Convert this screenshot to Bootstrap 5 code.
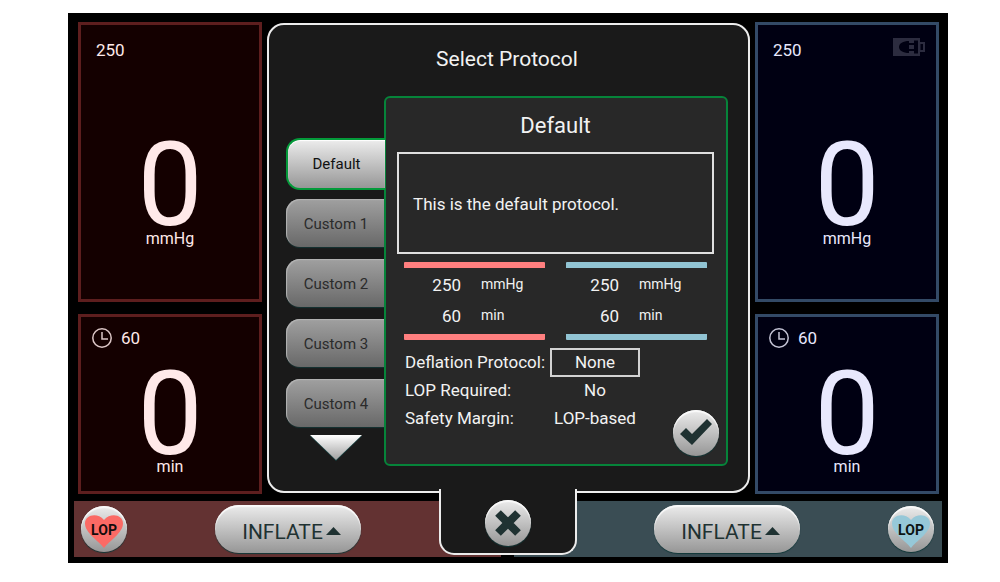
<!DOCTYPE html>
<html lang="en">
<head>
<meta charset="utf-8">
<meta name="viewport" content="width=device-width, initial-scale=1">
<title>Select Protocol</title>
<link rel="stylesheet" href="https://cdn.jsdelivr.net/npm/bootstrap@5.3.0/dist/css/bootstrap.min.css">
<style>
  body { font-family: Roboto, "Liberation Sans", sans-serif; font-size: 17px; line-height: 24px; background: #fff; }
  h1, h2, p, dl, dd, dt { margin: 0; font-weight: 400; }
  .device { margin: 13px 52px 0 68px; padding: 9px 0 6px; background: #000; }
  .screen { display: grid; grid-template-columns: 184fr 483fr 184fr; column-gap: 5px; padding: 0 9px 0 10px; }

  /* cuff readouts */
  .readout-col { padding-bottom: 7px; }
  .readout { border: 3px solid; padding: 13px 15px; }
  .readout.pressure { min-height: 280px; }
  .readout.timer { min-height: 180px; padding: 9px 10px; }
  .cuff-a { background: #140000; border-color: #5d1e1e; color: #ffe9e9; }
  .cuff-b { background: #000012; border-color: #334a66; color: #e8e8fd; }
  .figure-num { font-size: 116px; line-height: 88px; text-align: center; }
  .pressure .figure-num { margin-top: 79px; }
  .timer .figure-num { margin-top: 20px; }
  .figure-unit { text-align: center; font-size: 16px; line-height: 20px; }
  .timer .figure-unit { line-height: 18px; }

  /* dialog */
  .dialog { background: #1a1a1a; border: 2px solid #ececec; border-radius: 17px; margin: 1px 0 8px; padding: 1px 20px 25px 17px; color: #f2f2f2; }
  .dialog h1 { font-size: 21px; line-height: 32px; padding: 17px 0 21px; text-align: center; }
  .tabs { flex: 0 0 98px; padding-top: 42px; gap: 12px; }
  .tab-btn { height: 48px; border: 0; border-radius: 14px 0 0 14px; font-size: 15px; color: #2b2b2b; padding: 2px 0 0 2px;
    background: linear-gradient(#a0a0a0, #686868); box-shadow: inset 1px 1px 1px #b4b4b4, 0 1px 1px #163434; }
  .tab-btn.active { height: 52px; margin: 0 -1px -3px 0; padding: 0; color: #111; z-index: 1; position: relative;
    border: 2px solid #049a3a; border-right: 0; background: linear-gradient(#ececec, #979797); box-shadow: inset 0 1px 1px #fff; }
  .more-btn { border: 0; background: none; padding: 0 0 0 2px; line-height: 0; margin-top: -5px; }
  .detail { background: #282828; border: 2px solid #06843a; border-radius: 6px; padding: 12px 12px 8px 11px; min-height: 370px; }
  .detail h2 { font-size: 22px; line-height: 32px; text-align: center; }
  .note { border: 2px solid #e0e0e0; height: 102px; margin-top: 10px; padding: 2px 14px 0; display: flex; align-items: center; }
  .limits { gap: 21px; padding: 8px 7px 0; }
  .limits table { flex: 1 1 0; table-layout: fixed; border-collapse: separate; border-spacing: 0; border-top: 6px solid; border-bottom: 6px solid; border-radius: 1px; }
  .limits .red { border-color: #ff7f7f; }
  .limits .blue { border-color: #91c4d3; }
  .limits td { height: 32px; padding: 0 0 0 20px; font-size: 14px; color: #f2f2f2; border: 0; }
  .limits th { height: 32px; width: 57px; padding: 2px 0 0; font-weight: 400; text-align: right; color: #f2f2f2; border: 0; }
  .limits .blue th { width: 53px; }
  .limits tr:last-child > * { height: 34px; padding-bottom: 4px; }
  .facts { display: grid; grid-template-columns: 145px 90px; margin: 8px 0 0 8px; grid-auto-rows: 28px; align-items: center; align-content: start; }
  .facts dd { text-align: center; white-space: nowrap; }
  .pick { display: block; width: 100%; height: 29px; border: 2px solid #d2d2d2; background: none; color: #f2f2f2; padding: 0; line-height: 24px; }

  /* metallic controls */
  .metal { border: 0; padding: 0; background: linear-gradient(#ececec, #969696); color: #1f3232;
    box-shadow: inset 0 2px 1px #fafafa, 0 1px 1px #103838; }
  .round-btn { width: 46px; height: 46px; border-radius: 50%; display: grid; place-items: center; flex: none; }
  .confirm { margin-right: -5px; }
  .inflate { width: 146px; height: 48px; border-radius: 24px; font-size: 21px; padding: 5px 0 0 8px; }
  .inflate svg { margin: 0 0 3px 2px; }
  .actions { gap: 13px; margin: 0 6px; position: relative; }
  .side { flex: 1; height: 56px; }
  .side-a { background: #633232; padding-left: 7px; }
  .side-b { background: #3a4d54; padding-right: 8px; }
  .close-tab { position: absolute; left: 50%; bottom: 2px; width: 138px; height: 66px; transform: translateX(-50%);
    padding-top: 4px; background: #1a1a1a; border: 2px solid #ececec; border-top: 0; border-radius: 0 0 15px 15px; }
  .gap-wide { gap: 88px; }
</style>
</head>
<body>
<main class="device">
  <div class="screen">
    <div class="readout-col d-flex flex-column justify-content-between">
      <section class="readout pressure cuff-a">
        <div>250</div>
        <div class="figure-num">0</div>
        <div class="figure-unit">mmHg</div>
      </section>
      <section class="readout timer cuff-a">
        <div class="d-flex align-items-center">
          <svg class="me-2" width="22" height="22" viewBox="0 0 22 22" fill="none" stroke="#dcc6c6" stroke-width="1.500"><circle cx="11" cy="11" r="9.200"/><path d="M11 5v7h6"/></svg>60
        </div>
        <div class="figure-num">0</div>
        <div class="figure-unit">min</div>
      </section>
    </div>

    <section class="dialog" role="dialog" aria-labelledby="dlg-title">
      <h1 id="dlg-title">Select Protocol</h1>
      <div class="d-flex">
        <nav class="tabs d-flex flex-column">
          <button type="button" class="tab-btn active">Default</button>
          <button type="button" class="tab-btn">Custom 1</button>
          <button type="button" class="tab-btn">Custom 2</button>
          <button type="button" class="tab-btn">Custom 3</button>
          <button type="button" class="tab-btn">Custom 4</button>
          <button type="button" class="more-btn" aria-label="More protocols">
            <svg width="54" height="28" viewBox="0 0 54 28"><defs><linearGradient id="tri" x2="0" y2="1"><stop stop-color="#fff"/><stop offset="1" stop-color="#a0a0a0"/></linearGradient></defs><path d="M1 2h52L27 27z" fill="#164040"/><path d="M1 1h52L27 26z" fill="url(#tri)"/></svg>
          </button>
        </nav>
        <div class="detail d-flex flex-column flex-grow-1">
          <h2>Default</h2>
          <p class="note">This is the default protocol.</p>
          <div class="limits d-flex">
            <table class="red">
              <tr><th scope="row">250</th><td>mmHg</td></tr>
              <tr><th scope="row">60</th><td>min</td></tr>
            </table>
            <table class="blue">
              <tr><th scope="row">250</th><td>mmHg</td></tr>
              <tr><th scope="row">60</th><td>min</td></tr>
            </table>
          </div>
          <div class="d-flex flex-grow-1 justify-content-between">
            <dl class="facts">
              <dt id="defl">Deflation Protocol:</dt><dd><button type="button" class="pick" aria-describedby="defl">None</button></dd>
              <dt>LOP Required:</dt><dd>No</dd>
              <dt>Safety Margin:</dt><dd>LOP-based</dd>
            </dl>
            <button type="button" class="metal round-btn confirm mt-auto" aria-label="Confirm">
              <svg width="36" height="30" viewBox="0 0 36 30"><path d="M2 16l6-6 6 6L29 1l5 5-20 21z" fill="#1f3232"/></svg>
            </button>
          </div>
        </div>
      </div>
    </section>

    <div class="readout-col d-flex flex-column justify-content-between">
      <section class="readout pressure cuff-b">
        <div class="d-flex justify-content-between">250
          <svg width="34" height="18" viewBox="0 0 34 18" style="margin-right:-5px"><path d="M1 0h27v4h5v10h-5v4H1z" fill="#2c2c3f"/><path d="M28.500 6H31v6h-2.500z" fill="#000012"/><path d="M7 9c0-3.500 4-6 10-6v12C11 15 7 12.500 7 9z" fill="#000012"/><path d="M17 6h5M17 12h5" stroke="#000012" stroke-width="2"/><path d="M22 2.500h4v13h-4z" fill="#000012"/></svg>
        </div>
        <div class="figure-num">0</div>
        <div class="figure-unit">mmHg</div>
      </section>
      <section class="readout timer cuff-b">
        <div class="d-flex align-items-center">
          <svg class="me-2" width="22" height="22" viewBox="0 0 22 22" fill="none" stroke="#c4c4d6" stroke-width="1.500"><circle cx="11" cy="11" r="9.200"/><path d="M11 5v7h6"/></svg>60
        </div>
        <div class="figure-num">0</div>
        <div class="figure-unit">min</div>
      </section>
    </div>
  </div>

  <footer class="actions d-flex">
    <div class="side side-a d-flex align-items-center gap-wide">
      <button type="button" class="metal round-btn">
        <svg width="42" height="42" viewBox="0 0 42 42"><path d="M21 40C16 33 2 25 2 15.500 2 7 14 4 21 12 28 4 40 7 40 15.500 40 25 26 33 21 40z" fill="#fb6a65"/><text x="21" y="27" text-anchor="middle" font-size="14" font-weight="700" fill="#140c0c">LOP</text></svg>
      </button>
      <button type="button" class="metal inflate">INFLATE<svg width="17" height="10" viewBox="0 0 17 10"><path d="M1 9l7.500-8L16 9z" fill="#1f3232"/></svg></button>
    </div>
    <div class="side side-b d-flex align-items-center justify-content-end gap-wide">
      <button type="button" class="metal inflate">INFLATE<svg width="17" height="10" viewBox="0 0 17 10"><path d="M1 9l7.500-8L16 9z" fill="#1f3232"/></svg></button>
      <button type="button" class="metal round-btn">
        <svg width="42" height="42" viewBox="0 0 42 42"><path d="M21 40C16 33 2 25 2 15.500 2 7 14 4 21 12 28 4 40 7 40 15.500 40 25 26 33 21 40z" fill="#96c8d8"/><text x="21" y="27" text-anchor="middle" font-size="14" font-weight="700" fill="#0c1414">LOP</text></svg>
      </button>
    </div>
    <div class="close-tab d-flex justify-content-center align-items-center">
      <button type="button" class="metal round-btn" aria-label="Close">
        <svg width="28" height="28" viewBox="0 0 28 28"><path d="M4 4l20 20M24 4L4 24" stroke="#1f3232" stroke-width="8"/></svg>
      </button>
    </div>
  </footer>
</main>
<script src="https://cdn.jsdelivr.net/npm/bootstrap@5.3.0/dist/js/bootstrap.bundle.min.js"></script>
</body>
</html>
